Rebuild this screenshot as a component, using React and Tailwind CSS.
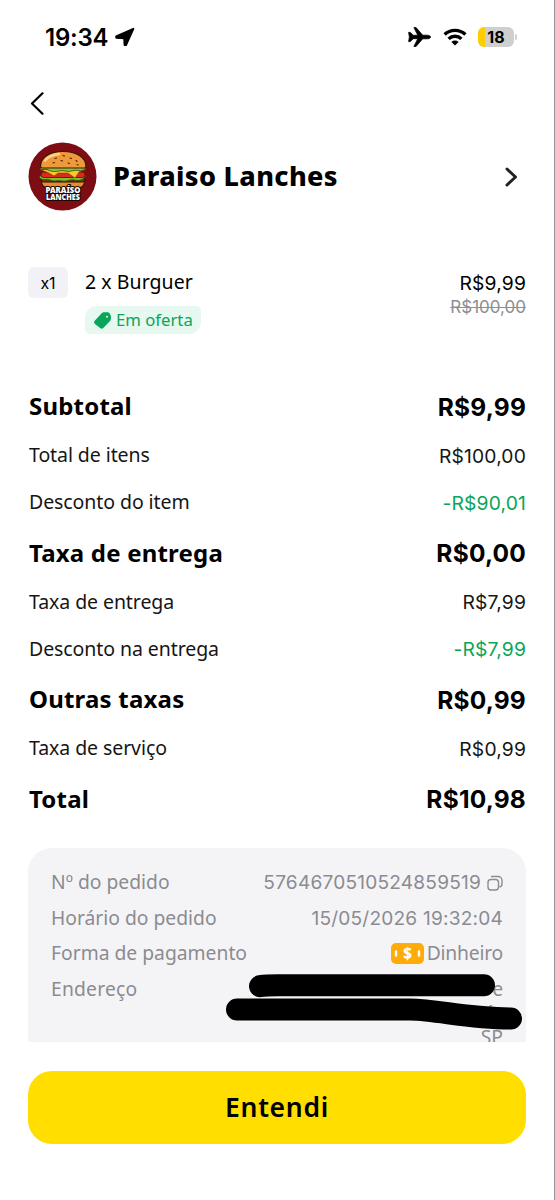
const priceRows = [
    { label: 'Subtotal', value: 'R$9,99', type: 'heading' },
    { label: 'Total de itens', value: 'R$100,00' },
    { label: 'Desconto do item', value: '-R$90,01', type: 'discount' },
    { label: 'Taxa de entrega', value: 'R$0,00', type: 'heading' },
    { label: 'Taxa de entrega', value: 'R$7,99' },
    { label: 'Desconto na entrega', value: '-R$7,99', type: 'discount' },
    { label: 'Outras taxas', value: 'R$0,99', type: 'heading' },
    { label: 'Taxa de serviço', value: 'R$0,99' },
    { label: 'Total', value: 'R$10,98', type: 'heading' }
]

function StatusBar() {
    return (
        <div className="h-[74px] pl-[45px] pr-[40px] flex items-center justify-between font-['Inter',sans-serif]">
            <div className="flex items-center gap-[7px]">
                <span className="text-[24px] font-semibold tracking-[-0.2px] pt-[2px]">19:34</span>
                <svg className="w-5 h-5" viewBox="0 0 20 20" fill="black" stroke="black" strokeWidth="2" strokeLinejoin="round">
                    <path d="M18.300 1.800L11 18 9.600 18 9.200 11.300 1.300 10.700 1.200 9.300z" />
                </svg>
            </div>
            <div className="flex items-center">
                <svg className="w-[23px] h-5" viewBox="0 0 23 20" fill="black" stroke="black" strokeWidth="0.8" strokeLinejoin="round">
                    <path d="M.6 5.400h1.700l2.900 2.900h4.600L5.900.6h2.200l6.600 7.600h4.400c2 0 3.500.9 3.500 1.800s-1.500 1.800-3.500 1.800h-4.400l-6.600 7.600H5.900l3.900-7.700H5.200l-2.900 2.900H.6L1.400 10z" />
                </svg>
                <svg className="w-6 h-[18px] ml-[12px]" viewBox="0 0 24 18" fill="none" stroke="black" strokeWidth="3.400">
                    <path d="M1.600 6.600a15 15 0 0 1 20.800 0" />
                    <path d="M5.600 10.900a9.200 9.200 0 0 1 12.800 0" />
                    <path d="M12 17.600l-3.600-3.700a5.200 5.200 0 0 1 7.200 0z" fill="black" stroke="none" />
                </svg>
                <div className="ml-[11px] w-9 h-5 rounded-[6px] overflow-hidden flex items-center justify-center bg-[linear-gradient(to_right,#ffcc00_20%,#cfcfcf_20%)]">
                    <span className="text-[16px] leading-5 font-bold">18</span>
                </div>
                <span className="w-[2px] h-[6px] ml-[1px] -mr-[3px] rounded-r-full bg-[#cfcfcf]" />
            </div>
        </div>
    )
}

function StoreLogo() {
    return (
        <svg className="w-[69px] h-[69px]" viewBox="0 0 69 69">
            <circle cx="34.500" cy="34.500" r="34" fill="#7d0d12" />
            {/* Bottom bun */}
            <path d="M13.500 39h43c0 4.500-2.500 7-7 7h-29c-4.500 0-7-2.500-7-7z" fill="#e98a2b" stroke="#3a1208" strokeWidth="1.200" />
            {/* Patty, salad, tomato and cheese */}
            <rect x="13" y="35" width="44" height="5" rx="2.500" fill="#7a3312" stroke="#2f0f06" />
            <path d="M11 35c4 5 7 1 11 3s7 0 12 1 8-2 12-1 8 1 12-4l-5-3H16z" fill="#7fbf2a" stroke="#244b0c" strokeWidth="0.8" />
            <rect x="13" y="30" width="44" height="5.500" rx="2.500" fill="#d92a1c" stroke="#5a0d08" strokeWidth="0.8" />
            <path d="M12 27.500h46l-7 2.500-4 6-7-5-10 0-4 3-6-3.500z" fill="#ffc52e" stroke="#7a4508" strokeWidth="0.6" />
            <path d="M12 25.500c5-2 40-2 46 0l-2 2.500c-5 2-8-1-12 .8s-8-1-12 0-9 1-12-.8-7 1.500-8-2.500z" fill="#8cc63b" stroke="#244b0c" strokeWidth="0.8" />
            {/* Top bun */}
            <path d="M12.500 24.500C12.500 15 22 9.500 35 9.500S58 15 58 24.500c0 1-1 1.500-2 1.500H14.500c-1 0-2-.5-2-1.500z" fill="#ef9a3a" stroke="#3a1208" strokeWidth="1.200" />
            <path d="M17 18.500c3-4 8-6 14-6.500" fill="none" stroke="#ffd28a" strokeWidth="2.500" strokeLinecap="round" />
            <path d="M27 16.500l1.500-.5M35 13.500l1.500.5M42 16l1.500.5M33 18.500l1.500.5M25 21l1.500-.5M40 21l1.500.5M48 18.500l1 .8M49 22.500l1.200.5" stroke="#4a200c" strokeWidth="1.100" strokeLinecap="round" />
            <g fill="white" stroke="#1d0703" strokeWidth="2.200" paintOrder="stroke" strokeLinejoin="round" textAnchor="middle" fontFamily="Noto Sans, sans-serif" fontWeight="900" fontSize="8.800">
                <text x="35" y="50.500" textLength="35" lengthAdjust="spacingAndGlyphs">PARAÍSO</text>
                <text x="35" y="57.800" textLength="34" lengthAdjust="spacingAndGlyphs">LANCHES</text>
            </g>
        </svg>
    )
}

function PriceRow({ row }) {
    if (row.type === 'heading') {
        return (
            <div className="h-[52.5px] pt-[2px] pl-[1px] flex items-center justify-between text-[24px] font-bold">
                <span className="tracking-[0.2px]">{row.label}</span>
                <span className="pt-[2px] font-['Inter',sans-serif] text-[24.5px] tracking-[0.2px]">{row.value}</span>
            </div>
        )
    }
    return (
        <div className="h-[47px] pl-[1px] flex items-center justify-between text-[19.5px]">
            <span className="tracking-[-0.08px] text-[#151515]">{row.label}</span>
            <span className={`pt-[2px] font-['Inter',sans-serif] text-[19.3px] tracking-[0.15px] ${row.type === 'discount' ? 'text-[#09a55a]' : 'text-[#151515]'}`}>{row.value}</span>
        </div>
    )
}

function OrderDetails() {
    return (
        <div className="relative mt-[24px] h-[194px] rounded-t-[24px] bg-[#f4f4f7] overflow-hidden px-[23px] pt-[17px] text-[19.3px] text-[#8b8b91]">
            <div className="h-[35.5px] flex items-center justify-between">
                <span>Nº do pedido</span>
                <div className="flex items-center gap-[6px]">
                    <span className="font-['Inter',sans-serif] text-[19.1px] tracking-[0.2px]">5764670510524859519</span>
                    <svg className="w-4 h-4" viewBox="0 0 16 16" fill="none" stroke="currentColor" strokeWidth="1.400">
                        <rect x="1" y="4.500" width="10.500" height="10.500" rx="3" />
                        <path d="M4 1.500h7a4 4 0 0 1 4 4V9c0 1.800-1 2.800-2.500 3" />
                    </svg>
                </div>
            </div>
            <div className="h-[35.5px] flex items-center justify-between">
                <span>Horário do pedido</span>
                <span className="font-['Inter',sans-serif] text-[19.1px] tracking-[0.2px]">15/05/2026 19:32:04</span>
            </div>
            <div className="h-[35.5px] flex items-center justify-between">
                <span>Forma de pagamento</span>
                <div className="flex items-center gap-[3px]">
                    <svg className="w-[33px] h-[21px]" viewBox="0 0 33 21">
                        <rect width="33" height="21" rx="5" fill="#ffab0a" />
                        <path d="M5 8.500v4M28 8.500v4" stroke="white" strokeWidth="2.400" strokeLinecap="round" />
                        <text x="16.500" y="16" textAnchor="middle" fill="white" fontFamily="Noto Sans, sans-serif" fontWeight="800" fontSize="15">$</text>
                    </svg>
                    <span className="tracking-[-0.2px]">Dinheiro</span>
                </div>
            </div>
            <div className="flex justify-between leading-[24px] pt-[5px]">
                <span className="tracking-[0.2px]">Endereço</span>
                <div className="text-right">
                    <p>e</p>
                    <p className="pr-[10px]">´</p>
                    <p>SP</p>
                </div>
            </div>
            {/* Address is scribbled out */}
            <svg className="absolute left-0 top-0 w-[497px] h-[194px]" viewBox="0 0 497 194" fill="none" stroke="black" strokeWidth="22" strokeLinecap="round" strokeLinejoin="round">
                <path d="M232 138.200Q238 137.300 250 137.300H456" />
                <path d="M209 161.500H382C410 162 440 170.500 483 170.500" />
            </svg>
        </div>
    )
}

function App() {
    return (
        <div className="w-[555px] h-[1200px] overflow-hidden bg-white border-r border-[#969696] text-black font-['Noto_Sans',sans-serif]">
            <StatusBar />

            {/* Header */}
            <div className="h-[58px] pl-[30px] flex items-center">
                <svg className="w-[14px] h-[23px]" viewBox="0 0 14 23" fill="none" stroke="black" strokeWidth="2.200" strokeLinecap="round" strokeLinejoin="round">
                    <path d="M12.500 1.300L2 11.500l10.500 10.200" />
                </svg>
            </div>

            <div className="px-7">
                <div className="h-[89px] flex items-center">
                    <StoreLogo />
                    <h1 className="ml-4 flex-1 text-[27px] font-extrabold tracking-[0.35px]">Paraiso Lanches</h1>
                    <svg className="w-[13px] h-5 mr-[8px]" viewBox="0 0 13 20" fill="none" stroke="#222" strokeWidth="3" strokeLinecap="round" strokeLinejoin="round">
                        <path d="M2 2l8.500 8L2 18" />
                    </svg>
                </div>

                {/* Item */}
                <div className="mt-[46px] h-[112px] flex items-start">
                    <span className="w-10 h-[31px] rounded-[6px] bg-[#f2f2f6] font-['Inter',sans-serif] text-[16px] flex items-center justify-center">x1</span>
                    <div className="ml-[17px] flex-1">
                        <p className="h-[31px] leading-[30px] text-[19.5px] font-[450] tracking-[0.05px]">2 x Burguer</p>
                        <div className="mt-[8px] w-[116px] h-7 pl-[9px] flex items-center gap-[5px] bg-[#e6f8ef] text-[#09a55a] rounded-tl-[12px] rounded-br-[12px] rounded-tr-[5px] rounded-bl-[5px]">
                            <svg className="w-[17px] h-[17px]" viewBox="0 0 17 17">
                                <path d="M7.900 1.100Q8.600.3 9.700.3L13.800.3Q14.900.3 15.500 1.200L16.600 3.200Q17 4 17 5L16.800 7.500Q16.700 8.400 16 9.100L9.200 16Q7.900 17.200 6.500 16.200L.9 11.900Q-.5 10.600.5 9.100z" fill="currentColor" />
                                <circle cx="13" cy="4.700" r="1" fill="#e6f8ef" />
                            </svg>
                            <span className="text-[16.7px]">Em oferta</span>
                        </div>
                    </div>
                    <div className="text-right leading-[24px] pt-1 font-['Inter',sans-serif]">
                        <p className="text-[19.3px] tracking-[0.15px]">R$9,99</p>
                        <p className="text-[17px] text-[#8e8e93] line-through">R$100,00</p>
                    </div>
                </div>

                {priceRows.map((row, index) => (
                    <PriceRow key={index} row={row} />
                ))}

                <OrderDetails />

                <button className="mt-[29px] w-full h-[73px] pt-[1px] rounded-[24px] bg-[#ffde00] text-[26.5px] font-semibold tracking-[0.7px]">
                    Entendi
                </button>
            </div>
        </div>
    )
}

export default App
